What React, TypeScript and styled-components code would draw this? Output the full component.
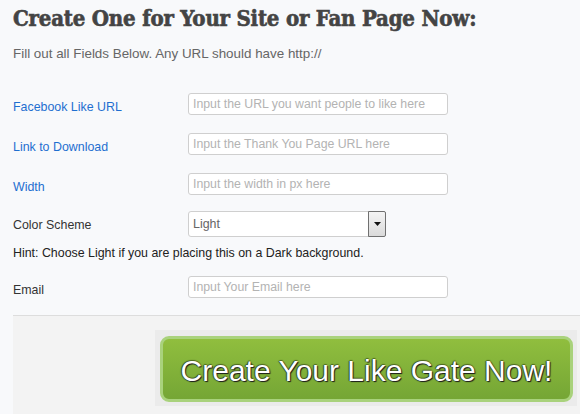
import React from 'react';
import styled, { createGlobalStyle } from 'styled-components';

const GlobalStyle = createGlobalStyle`
  html, body {
    margin: 0;
    padding: 0;
    background: #f8f9fb;
  }
  body {
    font-family: 'Liberation Sans', Arial, sans-serif;
  }
`;

const Page = styled.div`
  width: 580px;
  height: 414px;
  overflow: hidden;
  display: flex;
  flex-direction: column;
`;

const Intro = styled.div`
  padding: 0 0 0 13px;
`;

const Title = styled.h1`
  margin: 0;
  padding-top: 5px;
  font-family: 'DejaVu Serif', 'Liberation Serif', serif;
  font-stretch: condensed;
  font-weight: bold;
  font-size: 22px;
  line-height: 26px;
  color: #444444;
  -webkit-text-stroke: 0.6px #444444;
  letter-spacing: -0.2px;
  white-space: nowrap;
`;

const Subtitle = styled.p`
  margin: 15px 0 0;
  font-size: 13.4px;
  line-height: 16px;
  color: #666666;
`;

const Form = styled.div`
  padding: 31px 0 0 13px;
  display: flex;
  flex-direction: column;
`;

const Row = styled.div<{ gap: number }>`
  display: flex;
  align-items: flex-start;
  margin-bottom: ${p => p.gap}px;
`;

const Label = styled.label<{ blue?: boolean }>`
  width: 175px;
  flex-shrink: 0;
  padding-top: 6px;
  font-size: 12.4px;
  line-height: 16px;
  color: ${p => (p.blue ? '#1f6fd0' : '#333333')};
`;

const Input = styled.input`
  box-sizing: border-box;
  width: 260px;
  height: 22px;
  margin: 0;
  padding: 0 4px;
  border: 1px solid #cfcfcf;
  border-radius: 3px;
  background: #ffffff;
  font-family: 'Liberation Sans', Arial, sans-serif;
  font-size: 12.3px;
  color: #333;
  outline: none;

  &::placeholder {
    color: #b3b3b3;
  }
`;

const SelectBox = styled.div`
  box-sizing: border-box;
  width: 198px;
  height: 26px;
  display: flex;
  align-items: stretch;
  border: 1px solid #cfcfcf;
  border-radius: 3px;
  background: #ffffff;
`;

const SelectValue = styled.span`
  flex: 1;
  padding: 4px 0 0 4px;
  font-size: 12.4px;
  line-height: 16px;
  color: #666666;
`;

const ArrowButton = styled.span`
  box-sizing: border-box;
  width: 18px;
  margin: -1px -1px -1px 0;
  display: flex;
  align-items: center;
  justify-content: center;
  border: 1px solid #707070;
  border-radius: 0 2px 2px 0;
  background: linear-gradient(#f4f4f4, #dadada);
`;

const Hint = styled.p`
  margin: 0 0 15px;
  font-size: 12.4px;
  line-height: 16px;
  color: #222222;
`;

const Footer = styled.div`
  flex: 1;
  margin: 17px 0 0 13px;
  border-top: 1px solid #dddddd;
  background: #f3f3f3;
  padding: 14px 0 0 142px;
`;

const ButtonFrame = styled.div`
  display: inline-block;
  padding: 6px 4px 4px 5px;
  background: #ebebeb;
`;

const CreateButton = styled.button`
  box-sizing: border-box;
  width: 413px;
  height: 66px;
  margin: 0;
  padding: 4px 0 0;
  border: 3px solid #a9d27c;
  border-radius: 9px;
  background: linear-gradient(#90be3e, #75a635);
  font-family: 'Liberation Sans', Arial, sans-serif;
  font-size: 30px;
  color: #ffffff;
  text-shadow: 1px 1px 1px #1a1a1a, -1px 0 1px rgba(0, 0, 0, 0.55), 0 -1px 1px rgba(0, 0, 0, 0.4);
  cursor: pointer;
`;

const fields = [
  { label: 'Facebook Like URL', placeholder: 'Input the URL you want people to like here' },
  { label: 'Link to Download', placeholder: 'Input the Thank You Page URL here' },
  { label: 'Width', placeholder: 'Input the width in px here' },
];

const App: React.FC = () => {
  return (
    <>
      <GlobalStyle />
      <Page>
        <Intro>
          <Title>Create One for Your Site or Fan Page Now:</Title>
          <Subtitle>Fill out all Fields Below. Any URL should have http://</Subtitle>
        </Intro>

        <Form>
          {fields.map((f, i) => (
            <Row key={f.label} gap={i < 2 ? 18 : 16}>
              <Label blue>{f.label}</Label>
              <Input placeholder={f.placeholder} />
            </Row>
          ))}
          <Row gap={8}>
            <Label>Color Scheme</Label>
            <SelectBox>
              <SelectValue>Light</SelectValue>
              <ArrowButton>
                <svg width="7" height="4" viewBox="0 0 7 4">
                  <path d="M0 0h7L3.5 4z" fill="#111" />
                </svg>
              </ArrowButton>
            </SelectBox>
          </Row>
          <Hint>Hint: Choose Light if you are placing this on a Dark background.</Hint>
          <Row gap={0}>
            <Label>Email</Label>
            <Input placeholder="Input Your Email here" />
          </Row>
        </Form>

        <Footer>
          <ButtonFrame>
            <CreateButton>Create Your Like Gate Now!</CreateButton>
          </ButtonFrame>
        </Footer>
      </Page>
    </>
  );
};

export default App;
